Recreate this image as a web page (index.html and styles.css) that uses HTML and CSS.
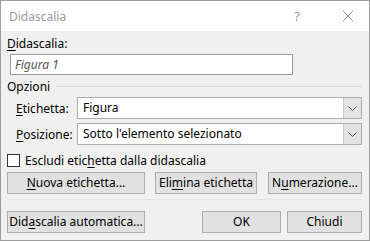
FILE: index.html
```html
<html>
<head>
    <title>Didascalia</title>
    <link rel="stylesheet" href="styles.css">
</head>
<body>
    <div class="dialog">
        <div class="titlebar">
            <span class="title">Didascalia</span>
            <span class="help">?</span>
            <svg class="close" width="12" height="12" viewBox="0 0 12 12">
                <path d="M1 1 L11 11 M11 1 L1 11" stroke="#8a8a8a" stroke-width="1" fill="none"/>
            </svg>
        </div>
        <div class="content">
            <div class="label"><u>D</u>idascalia:</div>
            <div class="textbox">Figura 1</div>

            <div class="group">
                <span>Opzioni</span>
                <div class="rule"></div>
            </div>

            <div class="field">
                <span class="field-label"><u>E</u>tichetta:</span>
                <div class="combo">
                    <span class="combo-text">Figura</span>
                    <span class="combo-btn">
                        <svg width="9" height="5" viewBox="0 0 9 5"><path d="M0.5 0.5 L4.5 4.5 L8.5 0.5" stroke="#555" fill="none"/></svg>
                    </span>
                </div>
            </div>
            <div class="field">
                <span class="field-label"><u>P</u>osizione:</span>
                <div class="combo">
                    <span class="combo-text">Sotto l'elemento selezionato</span>
                    <span class="combo-btn">
                        <svg width="9" height="5" viewBox="0 0 9 5"><path d="M0.5 0.5 L4.5 4.5 L8.5 0.5" stroke="#555" fill="none"/></svg>
                    </span>
                </div>
            </div>

            <div class="check">
                <span class="box"></span>
                <span>Escludi etic<u>h</u>etta dalla didascalia</span>
            </div>

            <div class="buttons">
                <div class="btn w-wide"><u>N</u>uova etichetta...</div>
                <div class="btn w-elim">Eli<u>m</u>ina etichetta</div>
                <div class="btn w-num">N<u>u</u>merazione...</div>
            </div>

            <div class="sep"></div>

            <div class="buttons">
                <div class="btn w-wide">Did<u>a</u>scalia automatica...</div>
                <div class="spacer"></div>
                <div class="btn w-ok">OK</div>
                <div class="btn w-close">Chiudi</div>
            </div>
        </div>
    </div>
</body>
</html>
```

FILE: styles.css
```css
body {
    margin: 0;
    font: 12px "Noto Sans", sans-serif;
    color: #000;
}

u {
    text-decoration-thickness: 1px;
    text-underline-offset: 2px;
}

.dialog {
    width: 370px;
    height: 241px;
    box-sizing: border-box;
    border: 1px solid #9b9b9b;
    background-color: #f0f0f0;
    display: flex;
    flex-direction: column;
}

.titlebar {
    height: 30px;
    background-color: #fff;
    display: flex;
    align-items: center;
    padding-left: 8px;
    color: #9a9a9a;
}

.title {
    flex: 1;
}

.help {
    margin-right: 42px;
    font-size: 13px;
}

.close {
    margin-right: 15px;
}

.content {
    padding: 5px 7px 0 6px;
}

.label {
    height: 16px;
    line-height: 16px;
}

.textbox {
    margin: 2px 0 0 3px;
    width: 283px;
    height: 21px;
    box-sizing: border-box;
    border: 1px solid #9c9c9c;
    background-color: #fff;
    color: #555;
    font-style: italic;
    padding-left: 4px;
    line-height: 19px;
}

.group {
    margin-top: 3px;
    height: 16px;
    display: flex;
    align-items: center;
}

.rule {
    flex: 1;
    height: 1px;
    background-color: #dcdcdc;
    margin-left: 6px;
}

.field {
    display: flex;
    align-items: center;
    margin-top: 3px;
}

.field + .field {
    margin-top: 4px;
}

.field-label {
    width: 61px;
    padding-left: 9px;
}

.combo {
    flex: 1;
    height: 22px;
    box-sizing: border-box;
    border: 1px solid #adadad;
    background-color: #fff;
    display: flex;
}

.combo-text {
    flex: 1;
    padding-left: 5px;
    line-height: 20px;
}

.combo-btn {
    width: 17px;
    background-color: #e3e3e3;
    border-left: 1px solid #c8c8c8;
    display: flex;
    align-items: center;
    justify-content: center;
}

.check {
    margin-top: 8px;
    display: flex;
    align-items: center;
    height: 14px;
}

.box {
    width: 13px;
    height: 13px;
    box-sizing: border-box;
    border: 1px solid #333;
    background-color: #fff;
    margin-right: 5px;
}

.buttons {
    display: flex;
    margin-top: 5px;
}

.btn {
    height: 22px;
    box-sizing: border-box;
    border: 1px solid #adadad;
    background-color: #e1e1e1;
    text-align: center;
    line-height: 20px;
}

.w-wide {
    width: 138px;
}

.w-elim {
    width: 102px;
    margin-left: 10px;
}

.w-num {
    width: 94px;
    margin-left: 11px;
}

.spacer {
    flex: 1;
}

.w-ok {
    width: 79px;
}

.w-close {
    width: 75px;
    margin-left: 6px;
}

.sep {
    margin-top: 5px;
    height: 1px;
    background-color: #e4e4e4;
}

.sep + .buttons {
    margin-top: 11px;
}
```
